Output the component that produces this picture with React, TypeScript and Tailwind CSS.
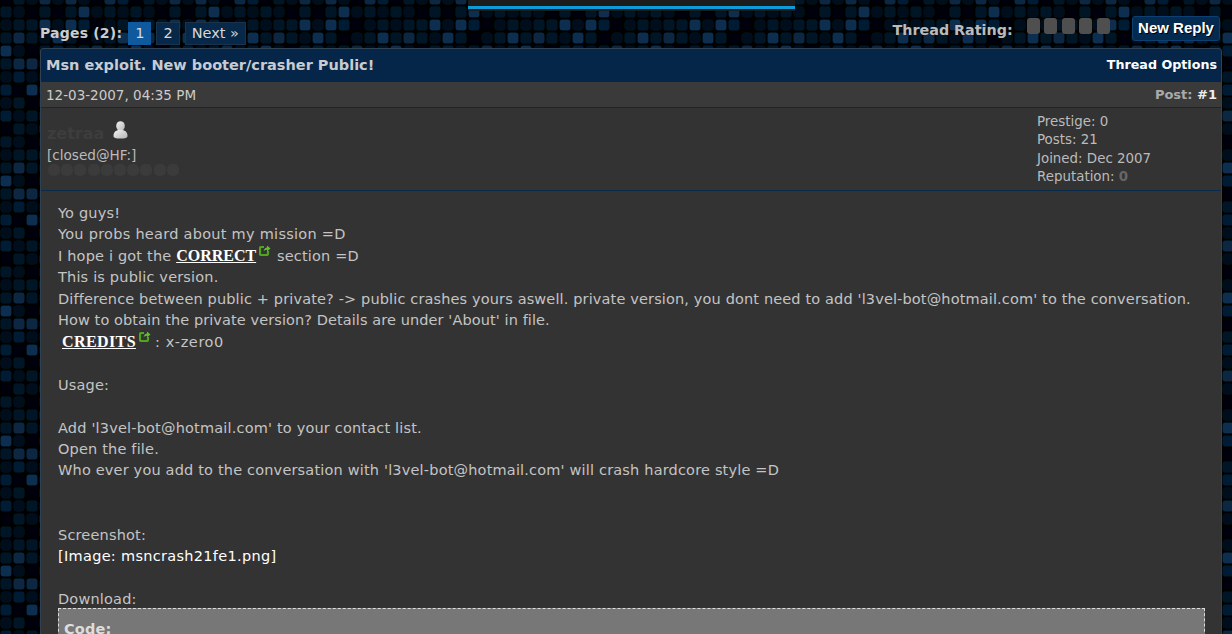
import React from 'react';

// brightness level per cell of the repeating 10x10 background tile
const tile = [
  [2, 1, 0, 2, 0, 2, 5, 1, 2, 1],
  [1, 2, 2, 5, 1, 5, 3, 0, 1, 2],
  [2, 4, 2, 1, 5, 2, 0, 1, 2, 5],
  [5, 1, 0, 2, 3, 1, 2, 4, 1, 2],
  [2, 4, 4, 1, 0, 3, 1, 2, 5, 1],
  [1, 3, 1, 2, 2, 4, 0, 3, 1, 2],
  [3, 0, 5, 1, 3, 1, 2, 1, 4, 0],
  [1, 2, 0, 3, 1, 2, 5, 0, 2, 3],
  [3, 1, 2, 2, 4, 0, 1, 3, 1, 4],
  [0, 2, 1, 4, 1, 4, 1, 0, 4, 3],
];

const shades = ['#01060b', '#03101b', '#051726', '#061e35', '#082642', '#0a2e4f'];

const DotBackground = () => (
  <svg className="absolute inset-0" width="1232" height="634">
    <defs>
      <pattern id="dots" x="0" y="6" width="130" height="130" patternUnits="userSpaceOnUse">
        <rect width="130" height="130" fill="#000" />
        {tile.map((row, r) =>
          row.map((level, c) => (
            <rect key={`${r}-${c}`} x={c * 13 + 0.5} y={r * 13 + 0.5} width="11" height="11" rx="3" fill={shades[level]} />
          ))
        )}
      </pattern>
      <filter id="soften">
        <feGaussianBlur stdDeviation="0.6" />
      </filter>
    </defs>
    <rect width="1232" height="634" fill="url(#dots)" filter="url(#soften)" />
  </svg>
);

const ExternalIcon = () => (
  <svg width="12" height="12" viewBox="0 0 12 12" className="absolute -right-[15px] -top-[3px]">
    <path d="M5 3H2.200A1.200 1.200 0 0 0 1 4.200v5.600A1.200 1.200 0 0 0 2.200 11h5.600A1.200 1.200 0 0 0 9 9.800V7" fill="none" stroke="#4fa61e" strokeWidth="2.200" />
    <path d="M4.500 7.500C5 5 6.500 3.800 8 3.600V1.500L11.500 4.500 8 7.500V5.700C6.500 5.800 5.300 6.400 4.500 7.500Z" fill="#5fc025" />
  </svg>
);

const SiteLink = ({ children, wide }: { children: React.ReactNode; wide?: boolean }) => (
  <a
    className={`relative font-['Liberation_Serif',serif] text-[16px] font-bold leading-[0] text-white underline ${
      wide ? 'mr-[19px] tracking-[0.4px]' : 'mr-[16px] tracking-normal'
    }`}
  >
    {children}
    <ExternalIcon />
  </a>
);

const UserIcon = () => (
  <svg width="15" height="18" viewBox="0 0 15 18">
    <defs>
      <linearGradient id="userFill" x1="0" y1="0" x2="1" y2="1">
        <stop offset="0" stopColor="#f4f4f4" />
        <stop offset="1" stopColor="#b4b4b4" />
      </linearGradient>
    </defs>
    <ellipse cx="7.500" cy="5" rx="4.300" ry="4.800" fill="url(#userFill)" />
    <path d="M0.500 15c0-4 2.700-6.200 7-6.200s7 2.200 7 6.200c0 1.800-2.200 2.600-7 2.600S0.500 16.800 0.500 15Z" fill="url(#userFill)" />
  </svg>
);

const PageButton = ({ label, active }: { label: string; active?: boolean }) => (
  <a
    className={`flex h-[23px] items-center border px-[6px] text-[14.500px] ${
      active ? 'border-[#0f5a9e] bg-[#0f5a9e] text-[#d8d8d8]' : 'border-[#1c3248] bg-[#072848] text-[#d8d8d8]'
    }`}
  >
    {label}
  </a>
);

const App = () => {
  return (
    <div className="relative h-[634px] w-[1232px] overflow-hidden bg-black font-['DejaVu_Sans',sans-serif]">
      <DotBackground />

      <div className="relative">
        {/* bottom edge of the menu above */}
        <div className="ml-[468px] flex h-[11px] w-[327px] flex-col bg-[#1c1c1c] pt-[6px]">
          <div className="h-[3px] bg-[#0d9ad8]" />
        </div>

        <div className="ml-[40px] w-[1182px]">
          <div className="flex h-[37px] items-start justify-between">
            <div className="mt-[11px] flex items-center gap-[5px]">
              <span className="mr-[1px] text-[14px] font-bold tracking-[0.2px] text-[#cccccc]">Pages (2):</span>
              <PageButton label="1" active />
              <PageButton label="2" />
              <PageButton label="Next »" />
            </div>

            <div className="mt-[5px] flex items-start">
              <span className="mt-[4px] text-[14.300px] font-bold text-[#bbbbbb]">Thread Rating:</span>
              <div className="ml-[14px] mt-[2px] flex gap-[4.600px]">
                {[0, 1, 2, 3, 4].map(i => (
                  <div key={i} className="h-[16px] w-[13px] rounded-[3px] bg-[#4f4f4f]" />
                ))}
              </div>
              <a className="ml-[22px] mr-[2px] flex h-[25px] w-[88px] items-center justify-center rounded-[3px] border border-[#0c3f72] bg-[#052a50] font-['Liberation_Sans',sans-serif] text-[15px] font-bold text-white [text-shadow:1px_1px_0_#000]">
                New Reply
              </a>
            </div>
          </div>

          <div className="overflow-hidden rounded-t-[4px] border border-b-0 border-[#2f4254] bg-[#333333]">
            <div className="flex h-[33px] items-center justify-between bg-[#052649] pl-[5px] pr-[4px]">
              <span className="pt-[1px] text-[14.500px] font-bold text-[#c8ccd2]">Msn exploit. New booter/crasher Public!</span>
              <span className="mb-[1px] text-[12.700px] font-bold text-white">Thread Options</span>
            </div>

            <div className="flex h-[26px] items-center justify-between border-b border-[#0a2a4a] bg-[#3a3a3a] pl-[5px] pr-[4px] pt-[1px]">
              <span className="text-[13.500px] text-[#cccccc]">12-03-2007, 04:35 PM</span>
              <span className="text-[13px] font-bold text-[#aaaaaa]">
                Post: <span className="text-[#eeeeee]">#1</span>
              </span>
            </div>

            <div className="flex h-[83px] justify-between border-b border-[#0a2a4a] pl-[6px]">
              <div>
                <div className="mt-[13px] flex h-[20px] items-center">
                  <span className="pt-[6px] text-[16px] font-bold text-[#3d3d3d]">zetraa</span>
                  <span className="mb-[2px] ml-[9px]">
                    <UserIcon />
                  </span>
                </div>
                <div className="mt-[6px] text-[13.600px] leading-[16px] text-[#bbbbbb]">[closed@HF:]</div>
                <div className="ml-[1px] mt-[1px] flex gap-[1.200px]">
                  {[0, 1, 2, 3, 4, 5, 6, 7, 8, 9].map(i => (
                    <div key={i} className="h-[12px] w-[12px] rounded-[5px] bg-[#3b3b3b]" />
                  ))}
                </div>
              </div>
              <div className="mt-[5px] w-[184px] text-[13.400px] leading-[18.400px] text-[#bbbbbb]">
                <div>Prestige: 0</div>
                <div>Posts: 21</div>
                <div>Joined: Dec 2007</div>
                <div>
                  Reputation: <span className="font-bold text-[#666666]">0</span>
                </div>
              </div>
            </div>

            <div className="pl-[17px] pr-[16px] pt-[12px] text-[14.500px] leading-[21.450px] tracking-[0.18px] text-[#c4c4c4]">
              <div>Yo guys!</div>
              <div className="tracking-[0.27px]">You probs heard about my mission =D</div>
              <div>
                I hope i got the <SiteLink>CORRECT</SiteLink> section =D
              </div>
              <div>This is public version.</div>
              <div className="tracking-[0.14px]">
                Difference between public + private? -&gt; public crashes yours aswell. private version, you dont need to add 'l3vel-bot@hotmail.com' to the conversation.
              </div>
              <div className="tracking-[0.09px]">How to obtain the private version? Details are under 'About' in file.</div>
              <div className="tracking-[0.6px]">
                <span className="ml-[4px]">
                  <SiteLink wide>CREDITS</SiteLink>
                </span>
                : x-zero0
              </div>
              <div className="h-[21.450px]" />
              <div>Usage:</div>
              <div className="h-[21.450px]" />
              <div>Add 'l3vel-bot@hotmail.com' to your contact list.</div>
              <div>Open the file.</div>
              <div>Who ever you add to the conversation with 'l3vel-bot@hotmail.com' will crash hardcore style =D</div>
              <div className="h-[42.900px]" />
              <div>Screenshot:</div>
              <div className="tracking-[0.3px] text-white">[Image: msncrash21fe1.png]</div>
              <div className="h-[21.450px]" />
              <div>Download:</div>
              <div className="-mt-[3px] h-[60px] border border-dashed border-[#dddddd] bg-[#777777] px-[5px] pt-[10px] font-bold text-[#dddddd]">
                Code:
              </div>
            </div>
          </div>
        </div>
      </div>
    </div>
  );
};

export default App;
